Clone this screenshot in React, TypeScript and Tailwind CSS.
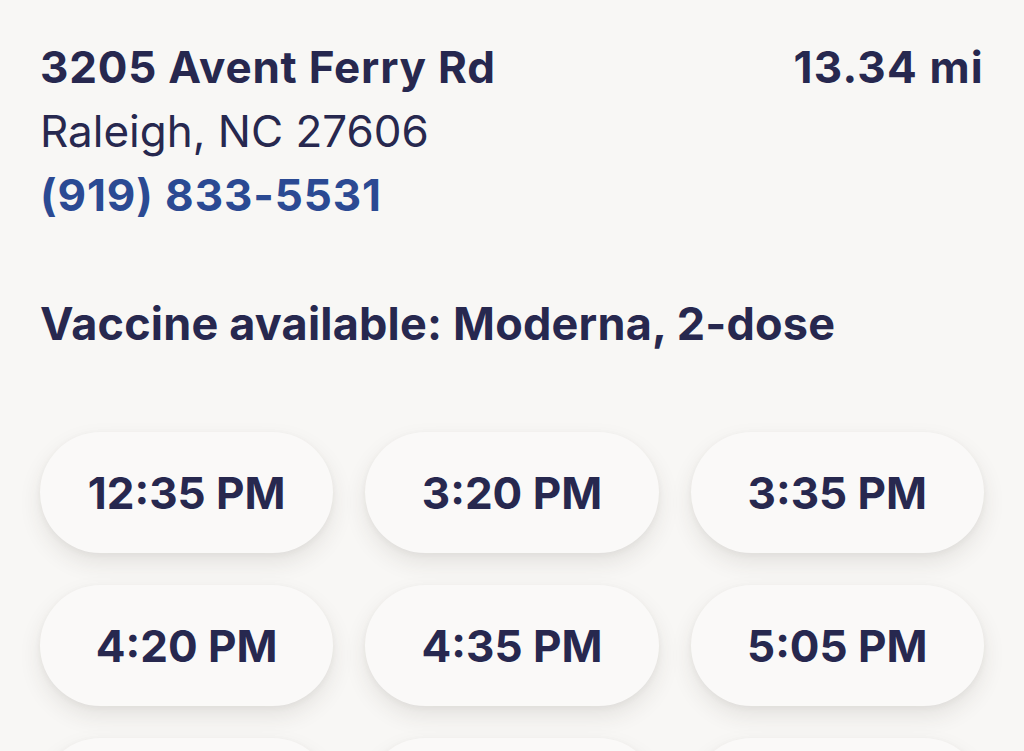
import React from 'react';

const times = ['12:35 PM', '3:20 PM', '3:35 PM', '4:20 PM', '4:35 PM', '5:05 PM', '5:20 PM', '5:35 PM', '5:50 PM'];

const TimeSlot: React.FC<{ label: string }> = ({ label }) => (
  <button
    type="button"
    className="h-[121px] rounded-full bg-[#faf9f8] text-[44px] font-bold text-[#27284f] shadow-[0_10px_22px_rgba(60,50,40,0.10),0_2px_6px_rgba(60,50,40,0.05)]"
  >
    {label}
  </button>
);

export default function App() {
  return (
    <div
      className="h-[751px] overflow-hidden bg-[#f8f7f5] px-10 pt-[35px] text-[#27284f]"
      style={{ fontFamily: 'Inter, "Noto Sans", sans-serif' }}
    >
      <div className="flex items-start justify-between">
        <div className="text-[44px] leading-[64px]">
          <div className="font-bold tracking-[0.8px]">3205 Avent Ferry Rd</div>
          <div className="font-normal">Raleigh, NC 27606</div>
          <div className="font-bold tracking-[0.9px] text-[#2b4a93]">(919) 833-5531</div>
        </div>
        <div className="text-[44px] font-bold leading-[64px] tracking-[1.2px]">13.34 mi</div>
      </div>

      <div className="mt-[65px] text-[45px] font-bold leading-[64px] tracking-[0.2px]">
        Vaccine available: Moderna, 2-dose
      </div>

      <div className="mt-[76px] grid grid-cols-3 gap-x-8 gap-y-[32px]">
        {times.map((t) => (
          <TimeSlot key={t} label={t} />
        ))}
      </div>
    </div>
  );
}
